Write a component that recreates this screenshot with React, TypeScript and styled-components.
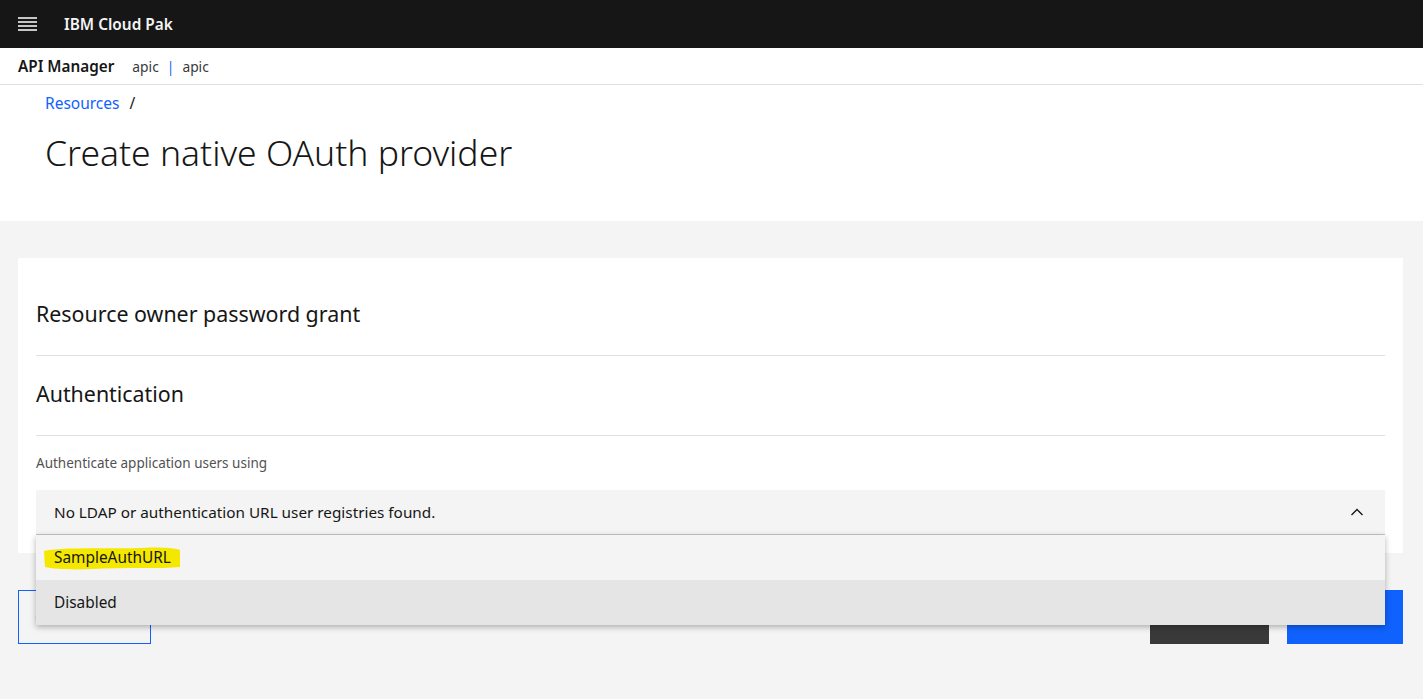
import React from 'react';
import styled, { createGlobalStyle } from 'styled-components';

const GlobalStyle = createGlobalStyle`
  html, body {
    margin: 0;
    padding: 0;
    background: #f4f4f4;
    font-family: "Noto Sans", "Liberation Sans", sans-serif;
    color: #161616;
  }
  * { box-sizing: border-box; }
`;

const Page = styled.div`
  min-height: 699px;
  display: flex;
  flex-direction: column;
  background: #f4f4f4;
`;

const TopBar = styled.header`
  height: 48px;
  background: #161616;
  display: flex;
  align-items: center;
  padding-left: 18px;
  gap: 26px;
`;

const Brand = styled.span`
  color: #f4f4f4;
  font-size: 15.4px;
  font-weight: 600;
`;

const SubBar = styled.div`
  height: 37px;
  background: #fff;
  border-bottom: 1px solid #e0e0e0;
  display: flex;
  align-items: center;
  padding-left: 18px;
  gap: 18px;
`;

const AppName = styled.span`
  font-size: 15.3px;
  font-weight: 600;
  color: #161616;
`;

const Instance = styled.span`
  font-size: 13.8px;
  color: #393939;
  display: flex;
  gap: 8px;
`;

const Pipe = styled.span`
  color: #0f62fe;
`;

const Header = styled.div`
  background: #fff;
  height: 136px;
  padding: 7px 45px 0;
`;

const Crumbs = styled.nav`
  display: flex;
  gap: 10px;
  font-size: 15.5px;
  line-height: 22px;
  color: #161616;
`;

const CrumbLink = styled.a`
  color: #0f62fe;
  text-decoration: none;
`;

const Title = styled.h1`
  margin: 16px 0 0;
  font-size: 35.5px;
  line-height: 44px;
  font-weight: 300;
  color: #161616;
`;

const Main = styled.main`
  padding: 37px 20px 0 18px;
`;

const Card = styled.section`
  background: #fff;
  padding: 0 18px 18px;
`;

const SectionHeading = styled.h2<{ $top: number }>`
  margin: 0;
  padding: ${p => p.$top}px 0 27px;
  font-size: 21.4px;
  line-height: 28px;
  font-weight: 400;
  border-bottom: 1px solid #e0e0e0;
`;

const FieldLabel = styled.label`
  display: block;
  margin-top: 19px;
  font-size: 13.5px;
  line-height: 16px;
  color: #525252;
`;

const SelectWrap = styled.div`
  position: relative;
  margin-top: 19px;
`;

const SelectField = styled.div`
  height: 45px;
  background: #f4f4f4;
  border-bottom: 1px solid #c6c6c6;
  display: flex;
  align-items: center;
  justify-content: space-between;
  padding: 0 20px 0 18px;
  font-size: 15.3px;
  color: #161616;
`;

const Menu = styled.ul`
  position: absolute;
  top: 45px;
  left: 0;
  right: 0;
  margin: 0;
  padding: 0;
  list-style: none;
  box-shadow: 0 2px 6px rgba(0, 0, 0, 0.3);
  z-index: 2;
`;

const MenuItem = styled.li<{ $hover?: boolean }>`
  position: relative;
  height: 45px;
  display: flex;
  align-items: center;
  padding-left: 18px;
  font-size: 15.4px;
  color: #161616;
  background: ${p => (p.$hover ? '#e5e5e5' : '#f4f4f4')};
`;

const Highlight = styled.svg`
  position: absolute;
  left: 6px;
  top: 10px;
  width: 140px;
  height: 26px;
`;

const ItemText = styled.span`
  position: relative;
`;

const Actions = styled.div`
  display: flex;
  gap: 18px;
  margin-top: 37px;
`;

const Button = styled.button<{ $kind: 'ghost' | 'secondary' | 'primary' }>`
  height: 54px;
  font-family: inherit;
  font-size: 15px;
  text-align: left;
  padding: 0 16px;
  cursor: pointer;
  border: 1px solid ${p => (p.$kind === 'ghost' ? '#0f62fe' : 'transparent')};
  background: ${p => (p.$kind === 'ghost' ? 'transparent' : p.$kind === 'secondary' ? '#393939' : '#0f62fe')};
  color: ${p => (p.$kind === 'ghost' ? '#0f62fe' : '#fff')};
  width: ${p => (p.$kind === 'ghost' ? 133 : p.$kind === 'secondary' ? 119 : 116)}px;
`;

const Spacer = styled.div`
  flex: 1;
`;

const Menu16 = () => (
  <svg width="20" height="16" viewBox="0 0 20 16">
    <g fill="#c6c6c6">
      <rect x="0" y="1" width="19" height="2" />
      <rect x="0" y="5" width="19" height="2" />
      <rect x="0" y="9" width="19" height="2" />
      <rect x="0" y="13" width="19" height="2" />
    </g>
  </svg>
);

const ChevronUp = () => (
  <svg width="16" height="16" viewBox="0 0 16 16">
    <path d="M2.5 11 L8 5.5 L13.5 11" fill="none" stroke="#161616" strokeWidth="1.4" />
  </svg>
);

export default function App() {
  return (
    <Page>
      <GlobalStyle />
      <TopBar>
        <Menu16 />
        <Brand>IBM Cloud Pak</Brand>
      </TopBar>
      <SubBar>
        <AppName>API Manager</AppName>
        <Instance>
          <span>apic</span>
          <Pipe>|</Pipe>
          <span>apic</span>
        </Instance>
      </SubBar>
      <Header>
        <Crumbs>
          <CrumbLink href="#">Resources</CrumbLink>
          <span>/</span>
        </Crumbs>
        <Title>Create native OAuth provider</Title>
      </Header>
      <Main>
        <Card>
          <SectionHeading $top={42}>Resource owner password grant</SectionHeading>
          <SectionHeading $top={24}>Authentication</SectionHeading>
          <FieldLabel>Authenticate application users using</FieldLabel>
          <SelectWrap>
            <SelectField>
              <span>No LDAP or authentication URL user registries found.</span>
              <ChevronUp />
            </SelectField>
            <Menu>
              <MenuItem>
                <Highlight viewBox="0 0 140 26" preserveAspectRatio="none">
                  <path
                    d="M2 6 C20 2 60 4 100 3 C118 2 132 3 138 5 L138 22 C120 24 80 22 50 24 C30 25 12 24 3 22 Z"
                    fill="#f5e800"
                  />
                </Highlight>
                <ItemText>SampleAuthURL</ItemText>
              </MenuItem>
              <MenuItem $hover>Disabled</MenuItem>
            </Menu>
          </SelectWrap>
        </Card>
        <Actions>
          <Button $kind="ghost">Cancel</Button>
          <Spacer />
          <Button $kind="secondary">Back</Button>
          <Button $kind="primary">Save</Button>
        </Actions>
      </Main>
    </Page>
  );
}
